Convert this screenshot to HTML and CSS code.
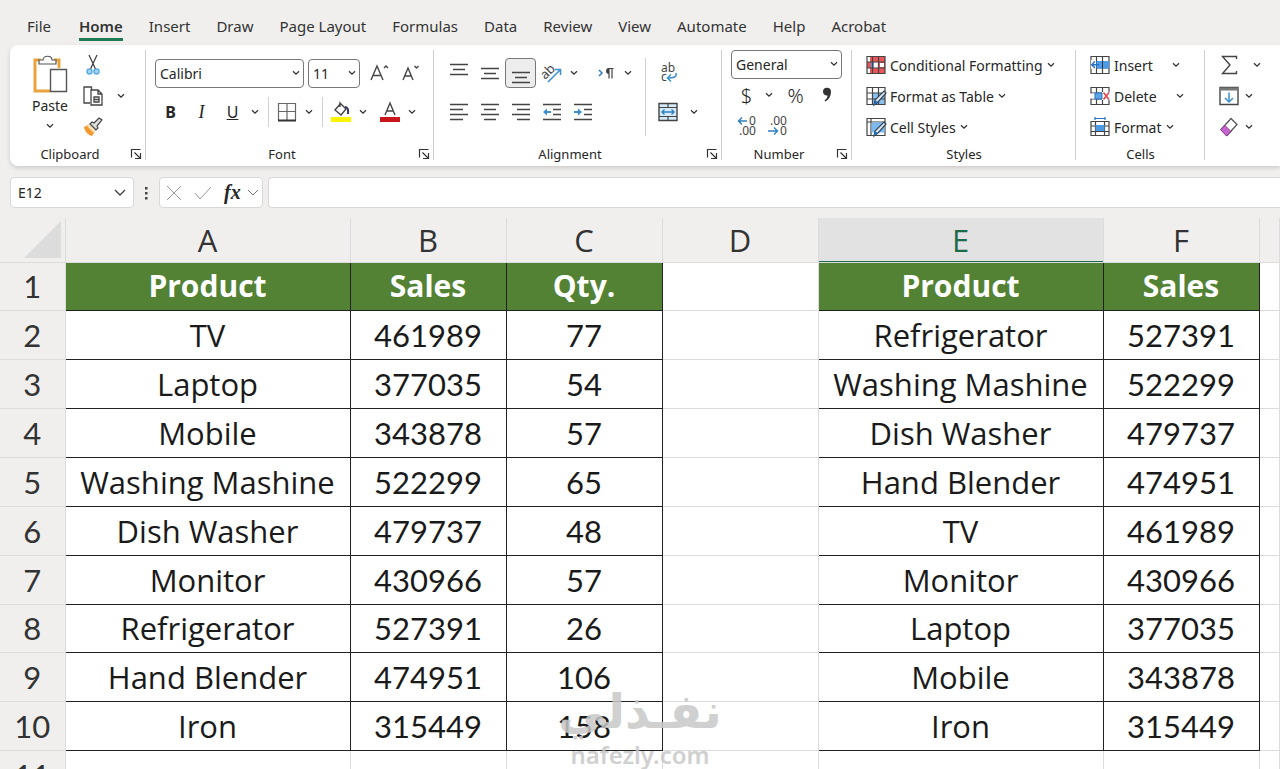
FILE: index.html
```html
<!DOCTYPE html>
<html lang="en">
<head>
    <meta charset="UTF-8">
    <meta name="viewport" content="width=device-width, initial-scale=1.0">
    <title>Product Sales</title>
    <link rel="stylesheet" href="styles.css">
</head>
<body>
    <!-- shared icons -->
    <svg class="sprite" aria-hidden="true">
        <symbol id="chevron" viewBox="0 0 8 6"><path d="M1 1.2 4 4.2 7 1.2" fill="none" stroke="#333" stroke-width="1.3"/></symbol>
        <symbol id="launcher" viewBox="0 0 12 12"><path d="M1.5 9.5v-8h9M4.5 4.5l5.5 5.5M10.500 5v5.500H5" fill="none" stroke="#333" stroke-width="1.2"/></symbol>
        <symbol id="grid" viewBox="0 0 20 20"><path d="M1 1.500h18v17H1zM1 7h18M1 13h18M6.500 1v18M12.500 1v18" fill="none" stroke="#444" stroke-width="1.200"/></symbol>
    </svg>

    <nav class="tabs">
        <a href="#">File</a>
        <a href="#" class="active">Home</a>
        <a href="#">Insert</a>
        <a href="#">Draw</a>
        <a href="#">Page Layout</a>
        <a href="#">Formulas</a>
        <a href="#">Data</a>
        <a href="#">Review</a>
        <a href="#">View</a>
        <a href="#">Automate</a>
        <a href="#">Help</a>
        <a href="#">Acrobat</a>
    </nav>

    <div class="ribbon">
        <section class="group clipboard">
            <div class="tools">
                <button class="paste">
                    <svg width="36" height="40" viewBox="0 0 36 40">
                        <path d="M9 6H3v31h15M22 6h5v8" fill="none" stroke="#e8a33d" stroke-width="3"/>
                        <path d="M7 10V6h4c0-5 9-5 9 0h4v4z" fill="#fff" stroke="#555" stroke-width="1.2"/>
                        <path d="M18.500 15.500h16v22h-16z" fill="#fff" stroke="#555" stroke-width="1.4"/>
                    </svg>
                    <span>Paste</span>
                    <svg class="chev"><use href="#chevron"/></svg>
                </button>
                <div class="stack">
                    <div class="row"><button class="tool" aria-label="Cut">
                        <svg width="16" height="22" viewBox="0 0 16 22"><path d="M4 1l6.500 14M12 1L5.500 15" fill="none" stroke="#444" stroke-width="1.300"/><circle cx="4.500" cy="17.500" r="2.500" fill="#a9d5f5" stroke="#5aaee8" stroke-width="1.500"/><circle cx="11.500" cy="17.500" r="2.500" fill="#a9d5f5" stroke="#5aaee8" stroke-width="1.500"/></svg>
                    </button></div>
                    <div class="row"><button class="tool" aria-label="Copy">
                        <svg width="20" height="20" viewBox="0 0 20 20"><path d="M7 17H1V1h7.500v3" fill="none" stroke="#444" stroke-width="1.300"/><path d="M8 4h7l4 4v11H8zM15 4v4h4M11 11h5v5h-5zM11 13.500h5" fill="none" stroke="#444" stroke-width="1.300"/></svg>
                    </button><button class="drop" aria-label="Copy options"><svg class="chev"><use href="#chevron"/></svg></button></div>
                    <div class="row"><button class="tool" aria-label="Format Painter">
                        <svg width="20" height="20" viewBox="0 0 20 20"><path d="M1 10l6-3 6 6-4 6c-4-1-7-4-8-9z" fill="#f39a2e"/><path d="M4 9l3-2 6 6-2 3z" fill="#fbe3c0"/><path d="M7 7l2-2 2 1 5-5 3 2-5 6 1 2-2 2z" fill="#ddd" stroke="#444" stroke-width="1.200"/></svg>
                    </button></div>
                </div>
            </div>
            <footer><span>Clipboard</span><button class="launch" aria-label="Clipboard settings"><svg><use href="#launcher"/></svg></button></footer>
        </section>

        <section class="group two font">
            <div class="tools">
                <div class="row">
                    <span class="combo family"><select aria-label="Font"><option>Calibri</option></select><svg class="chev"><use href="#chevron"/></svg></span>
                    <span class="combo size"><select aria-label="Font size"><option>11</option></select><svg class="chev"><use href="#chevron"/></svg></span>
                    <button class="tool" aria-label="Increase font size"><svg width="20" height="20" viewBox="0 0 20 20"><path d="M1 17L7 3l6 14M3 12.500h8M14 5l2-2 2 2" fill="none" stroke="#444" stroke-width="1.400"/></svg></button>
                    <button class="tool" aria-label="Decrease font size"><svg width="20" height="20" viewBox="0 0 20 20"><path d="M2 17L7 5l5 12M4 13h6M13.500 3l2 2 2-2" fill="none" stroke="#444" stroke-width="1.400"/></svg></button>
                </div>
                <div class="row">
                    <button class="tool bold">B</button>
                    <button class="tool italic">I</button>
                    <button class="tool underline">U</button>
                    <button class="drop" aria-label="Underline options"><svg class="chev"><use href="#chevron"/></svg></button>
                    <i class="sep"></i>
                    <button class="tool" aria-label="Borders"><svg width="20" height="20" viewBox="0 0 20 20"><path d="M1.500 18V1.500h17V18M10 2v16M2 9.500h17" fill="none" stroke="#666" stroke-width="1.200"/><path d="M1 18.500h18" stroke="#333" stroke-width="2"/></svg></button>
                    <button class="drop" aria-label="Border options"><svg class="chev"><use href="#chevron"/></svg></button>
                    <i class="sep"></i>
                    <button class="tool" aria-label="Fill color"><svg width="22" height="22" viewBox="0 0 22 22"><path d="M11 2L5 9l6 5 5-6-6-6v4" fill="none" stroke="#444" stroke-width="1.400"/><path d="M15 6c3 0 3.500 3 3 7" fill="none" stroke="#336" stroke-width="2"/><path d="M1 16h20v5H1z" fill="#fdf500"/></svg></button>
                    <button class="drop" aria-label="Fill colors"><svg class="chev"><use href="#chevron"/></svg></button>
                    <button class="tool after" aria-label="Font color"><svg width="20" height="22" viewBox="0 0 20 22"><path d="M5 14l5-12 5 12M7 10h6" fill="none" stroke="#444" stroke-width="1.400"/><path d="M0 16h20v5H0z" fill="#c9141b"/></svg></button>
                    <button class="drop" aria-label="Font colors"><svg class="chev"><use href="#chevron"/></svg></button>
                </div>
            </div>
            <footer><span>Font</span><button class="launch" aria-label="Font settings"><svg><use href="#launcher"/></svg></button></footer>
        </section>

        <section class="group two alignment">
            <div class="tools">
                <div class="halves">
                    <div>
                        <div class="row">
                            <button class="tool" aria-label="Top align"><svg class="lines" viewBox="0 0 18 18"><path d="M0 .500h18M3 5.500h12M0 10.500h18"/></svg></button>
                            <button class="tool" aria-label="Middle align"><svg class="lines" viewBox="0 0 18 18"><path d="M0 4.500h18M3 9.500h12M0 14.500h18"/></svg></button>
                            <button class="tool pressed" aria-label="Bottom align"><svg class="lines" viewBox="0 0 18 18"><path d="M0 8.500h18M3 13.500h12M0 18.500h18"/></svg></button>
                            <button class="tool" aria-label="Orientation"><svg width="22" height="22" viewBox="0 0 22 22"><text x="0" y="14" transform="rotate(-45 7 11)" font-size="13" fill="#444">ab</text><path d="M7 20L19 8M14 7.500h5.500V13" fill="none" stroke="#3a8fd0" stroke-width="1.500"/></svg></button>
                            <button class="drop" aria-label="Orientation options"><svg class="chev"><use href="#chevron"/></svg></button>
                            <button class="tool direction" aria-label="Text direction"><svg width="16" height="14" viewBox="0 0 16 14"><path d="M1 4l3 3-3 3" fill="none" stroke="#2f7fc0" stroke-width="1.500"/><path d="M11 2.500v10M14 2.500v10M15.500 2.500H10" fill="none" stroke="#444" stroke-width="1.200"/><path d="M11 2a3 3 0 0 0 0 6z" fill="#444"/></svg></button>
                            <button class="drop" aria-label="Direction options"><svg class="chev"><use href="#chevron"/></svg></button>
                        </div>
                        <div class="row">
                            <button class="tool" aria-label="Align left"><svg class="lines" viewBox="0 0 18 18"><path d="M0 1.500h18M0 6.500h13M0 11.500h18M0 16.500h13"/></svg></button>
                            <button class="tool" aria-label="Center"><svg class="lines" viewBox="0 0 18 18"><path d="M0 1.500h18M3 6.500h12M0 11.500h18M3 16.500h12"/></svg></button>
                            <button class="tool" aria-label="Align right"><svg class="lines" viewBox="0 0 18 18"><path d="M0 1.500h18M5 6.500h13M0 11.500h18M5 16.500h13"/></svg></button>
                            <button class="tool" aria-label="Decrease indent"><svg class="lines" viewBox="0 0 18 18"><path d="M0 1.500h18M10 6.500h8M10 11.500h8M0 16.500h18"/><path d="M4 5.500v7L0 9zM4 8h4v2H4z" class="blue"/></svg></button>
                            <button class="tool" aria-label="Increase indent"><svg class="lines" viewBox="0 0 18 18"><path d="M0 1.500h18M10 6.500h8M10 11.500h8M0 16.500h18"/><path d="M4 5.500v7L8 9zM0 8h4v2H0z" class="blue"/></svg></button>
                        </div>
                    </div>
                    <i class="sep tall"></i>
                    <div>
                        <div class="row">
                            <button class="tool" aria-label="Wrap text"><svg width="18" height="20" viewBox="0 0 18 20"><text x="2" y="9" font-size="12" fill="#444">ab</text><text x="2" y="18" font-size="12" fill="#444">c</text><path d="M17 10c1 4-2 5-8 5M12 11.500L8.500 15l3.500 3.500" fill="none" stroke="#3a8fd0" stroke-width="1.500"/></svg></button>
                        </div>
                        <div class="row">
                            <button class="tool" aria-label="Merge and center"><svg width="20" height="20" viewBox="0 0 20 20"><path d="M1 1.500h18v17H1z" fill="#d5ebfa" stroke="#444" stroke-width="1.400"/><path d="M1 5.500h18M1 14.500h18M10 1v4M10 15v4" stroke="#444" stroke-width="1.200"/><path d="M4 10h12M6.500 7.500L4 10l2.500 2.500M13.500 7.500L16 10l-2.500 2.500" fill="none" stroke="#2f7fc0" stroke-width="1.400"/></svg></button>
                            <button class="drop after" aria-label="Merge options"><svg class="chev"><use href="#chevron"/></svg></button>
                        </div>
                    </div>
                </div>
            </div>
            <footer><span>Alignment</span><button class="launch" aria-label="Alignment settings"><svg><use href="#launcher"/></svg></button></footer>
        </section>

        <section class="group number">
            <div class="tools">
                <div class="row"><span class="combo format"><select aria-label="Number format"><option>General</option></select><svg class="chev"><use href="#chevron"/></svg></span></div>
                <div class="row">
                    <button class="tool sign">$</button>
                    <button class="drop" aria-label="Currency options"><svg class="chev"><use href="#chevron"/></svg></button>
                    <button class="tool sign after">%</button>
                    <button class="tool" aria-label="Comma style"><svg width="10" height="16" viewBox="0 0 10 16"><path d="M1 5a4 4 0 0 1 8-.500c0 4.500-2 8-5.500 10l-1-1C4.500 12 5.500 10.500 5.500 8.500A3.700 3.700 0 0 1 1 5z" fill="#333"/></svg></button>
                </div>
                <div class="row">
                    <button class="tool" aria-label="Increase decimal"><svg width="20" height="22" viewBox="0 0 20 22"><text x="12" y="10" font-size="12" fill="#444">0</text><text x="2" y="20" font-size="12" fill="#444">.00</text><path d="M10 6H2M5 2.500L1.500 6 5 9.500" fill="none" stroke="#2f7fc0" stroke-width="1.400"/></svg></button>
                    <button class="tool" aria-label="Decrease decimal"><svg width="20" height="22" viewBox="0 0 20 22"><text x="2" y="10" font-size="12" fill="#444">.00</text><text x="12" y="20" font-size="12" fill="#444">0</text><path d="M0 16h9M6 12.500l3.500 3.500L6 19.500" fill="none" stroke="#2f7fc0" stroke-width="1.400"/></svg></button>
                </div>
            </div>
            <footer><span>Number</span><button class="launch" aria-label="Number settings"><svg><use href="#launcher"/></svg></button></footer>
        </section>

        <section class="group styles">
            <div class="tools">
                <div class="row"><button class="command">
                    <svg class="icon" viewBox="0 0 20 20"><path d="M1 1h18v18H1z" fill="#fff"/><path d="M4 1h8v6H4zM1 7h4v6H1zM13 1h6v18h-6zM4 13h8v6H4z" fill="#e9575a"/><path d="M14 8h4v4h-4z" fill="#fff"/><path d="M5 7h3v6H5z" fill="#5a9fe0"/><use href="#grid"/></svg>
                    <span>Conditional Formatting</span><svg class="chev"><use href="#chevron"/></svg></button></div>
                <div class="row"><button class="command">
                    <svg class="icon" viewBox="0 0 20 20"><path d="M1 1h18v18H1z" fill="#fff"/><path d="M6 7h13v12H6z" fill="#8cc1ee"/><use href="#grid"/><path d="M18 5l2 2-8 9-4 3 1-5z" fill="#dbe9f5" stroke="#345" stroke-width="1.200"/><path d="M8 19l1-5 3 2z" fill="#2472c8"/></svg>
                    <span>Format as Table</span><svg class="chev"><use href="#chevron"/></svg></button></div>
                <div class="row"><button class="command">
                    <svg class="icon" viewBox="0 0 20 20"><path d="M1 1.500h18v17H1z" fill="#fff" stroke="#444" stroke-width="1.200"/><path d="M1 5h18M5 1v18" stroke="#444" stroke-width="1.200"/><path d="M5.500 5.500h13v10h-13z" fill="#7cb9ee"/><path d="M18 5l2 2-8 9-4 3 1-5z" fill="#dbe9f5" stroke="#345" stroke-width="1.200"/><path d="M8 19l1-5 3 2z" fill="#2472c8"/></svg>
                    <span>Cell Styles</span><svg class="chev"><use href="#chevron"/></svg></button></div>
            </div>
            <footer><span>Styles</span></footer>
        </section>

        <section class="group cells">
            <div class="tools">
                <div class="row"><button class="command split">
                    <svg class="icon" viewBox="0 0 20 20"><use href="#grid"/><path d="M6.500 6h12.500v7.500H6.500z" fill="#4c9be6"/><path d="M12.500 6v7.500" stroke="#333"/><path d="M1 5h5v9H1z" fill="#fff"/><path d="M9 9.700H2M5 6.500L1.800 9.700 5 13" fill="none" stroke="#2472c8" stroke-width="1.500"/></svg>
                    <span>Insert</span><svg class="chev"><use href="#chevron"/></svg></button></div>
                <div class="row"><button class="command split">
                    <svg class="icon" viewBox="0 0 20 20"><use href="#grid"/><path d="M12 6h8v8h-8zM0 7.600h5.800v5H0z" fill="#fff"/><path d="M5 7h7v6H5z" fill="#5ca6ea" stroke="#2472c8"/><path d="M13.500 6.500l5.500 7M19 6.500l-5.500 7" stroke="#e0474b" stroke-width="1.600"/></svg>
                    <span>Delete</span><svg class="chev"><use href="#chevron"/></svg></button></div>
                <div class="row"><button class="command">
                    <svg class="icon" viewBox="0 0 20 20"><path d="M1 4.500h18v14H1zM1 9h18M1 14.500h18M5.500 4v15M14.500 4v15" fill="none" stroke="#444" stroke-width="1.200"/><path d="M5.500 8h9v6h-9z" fill="#4c9be6"/><path d="M5 0v3M15 0v3M5 1.500h10" stroke="#2472c8" stroke-width="1.200"/></svg>
                    <span>Format</span><svg class="chev"><use href="#chevron"/></svg></button></div>
            </div>
            <footer><span>Cells</span></footer>
        </section>

        <section class="group editing">
            <div class="tools">
                <div class="row"><button class="command wide" aria-label="AutoSum"><svg class="icon" viewBox="0 0 20 20"><path d="M17.500 4V1.500H3.500L11 10l-7.500 8.500h14V16" fill="none" stroke="#444" stroke-width="1.400"/></svg><svg class="chev"><use href="#chevron"/></svg></button></div>
                <div class="row"><button class="command" aria-label="Fill"><svg class="icon" viewBox="0 0 20 20"><path d="M1 1.500h18v17H1z" fill="#fff" stroke="#444" stroke-width="1.400"/><path d="M1 1.500h18v3H1z" fill="#777"/><path d="M10 6.500V16M6 12l4 4 4-4" fill="none" stroke="#3a8fd0" stroke-width="1.500"/></svg><svg class="chev"><use href="#chevron"/></svg></button></div>
                <div class="row"><button class="command" aria-label="Clear"><svg class="icon" viewBox="0 0 20 20"><path d="M12 1.500l6 6L8 18.500l-6-6z" fill="#fff" stroke="#555" stroke-width="1.300"/><path d="M6 8.500l6 6-4.500 4.500-6-6.500z" fill="#c765cf" stroke="#8b3d94"/></svg><svg class="chev"><use href="#chevron"/></svg></button></div>
            </div>
            <footer><span>Editing</span></footer>
        </section>
    </div>

    <div class="formula-bar">
        <div class="box name-box">
            <input type="text" value="E12" aria-label="Name box">
            <svg width="12" height="8" viewBox="0 0 12 8"><path d="M1 1l5 5 5-5" fill="none" stroke="#444" stroke-width="1.400"/></svg>
        </div>
        <svg class="dots" width="4" height="14" viewBox="0 0 4 14"><path d="M1 1h2.500v2.500H1zM1 6h2.500v2.500H1zM1 11h2.500v2.500H1z" fill="#444"/></svg>
        <div class="box entry">
            <button aria-label="Cancel"><svg width="16" height="16" viewBox="0 0 16 16"><path d="M1 1l14 14M15 1L1 15" stroke="#999"/></svg></button>
            <button aria-label="Enter"><svg width="18" height="14" viewBox="0 0 18 14"><path d="M1 7l5 6L17 1" fill="none" stroke="#999"/></svg></button>
            <button class="fx">fx</button>
            <svg width="12" height="8" viewBox="0 0 12 8"><path d="M1 1l5 5 5-5" fill="none" stroke="#777"/></svg>
        </div>
        <input type="text" class="box formula" aria-label="Formula">
    </div>

    <main class="sheet">
        <table>
            <colgroup>
                <col class="c-head"><col class="c-wide"><col class="c-num"><col class="c-num"><col class="c-num"><col class="c-wide"><col class="c-num"><col>
            </colgroup>
            <thead>
                <tr><th class="corner"><svg width="37" height="37" viewBox="0 0 37 37"><path d="M37 0v37H0z" fill="#dcdcdc"/></svg></th><th>A</th><th>B</th><th>C</th><th>D</th><th class="selected">E</th><th>F</th><th></th></tr>
            </thead>
            <tbody>
                <tr class="title"><th>1</th><td class="d">Product</td><td class="d">Sales</td><td class="d">Qty.</td><td></td><td class="d">Product</td><td class="d">Sales</td><td></td></tr>
                <tr><th>2</th><td class="d">TV</td><td class="d">461989</td><td class="d">77</td><td></td><td class="d">Refrigerator</td><td class="d">527391</td><td></td></tr>
                <tr><th>3</th><td class="d">Laptop</td><td class="d">377035</td><td class="d">54</td><td></td><td class="d">Washing Mashine</td><td class="d">522299</td><td></td></tr>
                <tr><th>4</th><td class="d">Mobile</td><td class="d">343878</td><td class="d">57</td><td></td><td class="d">Dish Washer</td><td class="d">479737</td><td></td></tr>
                <tr><th>5</th><td class="d">Washing Mashine</td><td class="d">522299</td><td class="d">65</td><td></td><td class="d">Hand Blender</td><td class="d">474951</td><td></td></tr>
                <tr><th>6</th><td class="d">Dish Washer</td><td class="d">479737</td><td class="d">48</td><td></td><td class="d">TV</td><td class="d">461989</td><td></td></tr>
                <tr><th>7</th><td class="d">Monitor</td><td class="d">430966</td><td class="d">57</td><td></td><td class="d">Monitor</td><td class="d">430966</td><td></td></tr>
                <tr><th>8</th><td class="d">Refrigerator</td><td class="d">527391</td><td class="d">26</td><td></td><td class="d">Laptop</td><td class="d">377035</td><td></td></tr>
                <tr><th>9</th><td class="d">Hand Blender</td><td class="d">474951</td><td class="d">106</td><td></td><td class="d">Mobile</td><td class="d">343878</td><td></td></tr>
                <tr><th>10</th><td class="d">Iron</td><td class="d">315449</td><td class="d">158</td><td></td><td class="d">Iron</td><td class="d">315449</td><td></td></tr>
                <tr><th>11</th><td></td><td></td><td></td><td></td><td></td><td></td><td></td></tr>
            </tbody>
        </table>
    </main>

    <div class="watermark">
        <span lang="ar" dir="rtl">نفـذلي</span>
        <small>nafezly.com</small>
    </div>
</body>
</html>
```
FILE: styles.css
```css
* {
    box-sizing: border-box;
}
body {
    margin: 0;
    height: 100vh;
    overflow: hidden;
    display: flex;
    flex-direction: column;
    position: relative;
    background-color: #f0efee;
    font-family: 'Noto Sans', 'Open Sans', sans-serif;
    font-size: 14px;
    color: #262626;
}
button, input, select {
    font: inherit;
    color: inherit;
    border: none;
    background: none;
    padding: 0;
    margin: 0;
}
svg {
    display: block;
    flex: none;
    overflow: visible;
}
.sprite {
    width: 0;
    height: 0;
    position: absolute;
}
.chev {
    width: 8px;
    height: 6px;
}

/* tabs */
.tabs {
    flex: none;
    display: flex;
    gap: 26px;
    height: 45px;
    padding: 12px 27px 0;
    font-size: 15px;
}
.tabs a {
    height: 29px;
    line-height: 28px;
    color: #333;
    text-decoration: none;
    white-space: nowrap;
}
.tabs .active {
    margin-left: 2px;
    font-weight: 600;
    border-bottom: 3px solid #1e7a55;
}

/* ribbon */
.ribbon {
    flex: none;
    display: flex;
    height: 121px;
    margin-left: 10px;
    overflow: hidden;
    background-color: #fff;
    border-radius: 8px 0 0 8px;
    box-shadow: 0 2px 4px rgba(0, 0, 0, 0.15);
}
.group {
    flex: none;
    display: flex;
    flex-direction: column;
    justify-content: space-between;
    position: relative;
    padding: 5px 0 2px 9px;
}
.group::after {
    content: "";
    position: absolute;
    right: 0;
    top: 5px;
    bottom: 6px;
    width: 1px;
    background-color: #d0d0d0;
}
.group footer {
    display: flex;
    align-items: center;
    height: 20px;
    margin-left: -9px;
    font-size: 13px;
}
.group footer span {
    flex: 1;
    text-align: center;
}
.launch {
    width: 16px;
}
.launch svg {
    width: 12px;
    height: 12px;
}
.row {
    display: flex;
    align-items: center;
    height: 30px;
    margin-bottom: 1px;
}
.two .row {
    margin: 8px 0 9px;
}
.two .row + .row {
    margin-top: 0;
}
.tool {
    width: 31px;
    height: 30px;
    display: flex;
    align-items: center;
    justify-content: center;
}
.drop {
    width: 14px;
    height: 30px;
    display: flex;
    align-items: center;
    justify-content: center;
}
.after {
    margin-left: 4px;
}
.sep {
    width: 1px;
    height: 30px;
    margin: 0 2px 0 6px;
    background-color: #d0d0d0;
}
.clipboard { width: 136px; }
.font { width: 288px; }
.alignment { width: 288px; }
.number { width: 130px; }
.styles { width: 224px; }
.cells { width: 129px; }
.editing { width: 196px; }

.clipboard .tools {
    display: flex;
}
.paste {
    width: 58px;
    display: flex;
    flex-direction: column;
    align-items: center;
    padding-top: 4px;
    padding-left: 4px;
}
.paste span {
    line-height: 24px;
    margin-bottom: 5px;
}
.clipboard .drop {
    margin-left: 6px;
}

.combo {
    display: flex;
    align-items: center;
    position: relative;
    height: 29px;
    margin-right: 4px;
}
.combo select {
    appearance: none;
    width: 100%;
    height: 100%;
    padding-left: 4px;
    border: 1px solid #777;
    border-radius: 4px;
    background-color: #fff;
}
.combo .chev {
    position: absolute;
    right: 4px;
}
.family { width: 149px; }
.size { width: 52px; }
.format { width: 111px; }
.bold {
    font-weight: 700;
    font-size: 16px;
}
.italic {
    font-family: 'Liberation Serif', serif;
    font-style: italic;
    font-size: 18px;
}
.underline {
    font-size: 16px;
    text-decoration: underline;
}
.sign {
    font-weight: 300;
    font-size: 20px;
}
.halves {
    display: flex;
}
.lines {
    width: 18px;
    height: 18px;
    fill: none;
    stroke: #444;
    stroke-width: 1.4;
}
.lines .blue {
    fill: #3a8fd0;
    stroke: none;
}
.pressed {
    background-color: #ededed;
    border: 1px solid #777;
    border-radius: 4px;
}
.direction {
    margin-left: 9px;
}
.tall {
    height: 78px;
    margin: 8px 6px 0 10px;
}
.command {
    display: flex;
    align-items: center;
    gap: 4px;
    white-space: nowrap;
}
.icon {
    width: 20px;
    height: 20px;
}
.split .chev {
    margin-left: 15px;
}
.number {
    padding-top: 4px;
}
.styles, .cells, .editing {
    padding-left: 14px;
}
.styles footer, .cells footer, .editing footer {
    margin-left: -14px;
}
.editing .command {
    gap: 6px;
}
.editing .wide {
    gap: 14px;
}

/* formula bar */
.formula-bar {
    flex: none;
    display: flex;
    align-items: center;
    height: 31px;
    margin: 11px 0 0 10px;
}
.box {
    display: flex;
    align-items: center;
    height: 31px;
    background-color: #fff;
    border: 1px solid #d8d8d8;
    border-radius: 4px;
}
.name-box {
    width: 124px;
    padding: 0 7px;
}
.name-box input {
    flex: 1;
    min-width: 0;
}
.dots {
    margin: 0 11px 0 10px;
}
.entry {
    width: 104px;
    margin-right: 5px;
    padding-left: 6px;
}
.entry button {
    margin-right: 12px;
}
.entry .fx {
    margin-right: 6px;
    font-family: 'Liberation Serif', serif;
    font-style: italic;
    font-weight: 700;
    font-size: 20px;
}
.formula {
    flex: 1;
    min-width: 0;
    border-right: none;
    border-radius: 4px 0 0 4px;
}

/* sheet */
.sheet {
    flex: 1;
    min-height: 0;
    overflow: hidden;
    margin-top: 10px;
}
table {
    width: 100%;
    height: 582px;
    table-layout: fixed;
    border-collapse: collapse;
    font-family: Lato, 'Open Sans', sans-serif;
    font-size: 31px;
    line-height: 40px;
    color: #1a1a1a;
}
.c-head { width: 65px; }
.c-wide { width: 285px; }
.c-num { width: 156px; }
th, td {
    height: 48px;
    padding: 0;
    text-align: center;
    white-space: nowrap;
    border: 1px solid #dcdcdc;
}
td {
    background-color: #fff;
}
th {
    font-weight: 400;
    color: #333;
    border-left: none;
    background-color: #f0efee;
}
thead th {
    height: 44px;
    border-top: none;
}
/* names and headings use the wider face, figures keep Lato */
thead th, .title td, td:nth-child(2), td:nth-child(6) {
    font-family: 'Open Sans', sans-serif;
}
.corner svg {
    margin-left: 24px;
}
thead .selected {
    color: #1e6b4c;
    background-color: #e2e2e2;
    box-shadow: inset 0 -1px #1e6b4c;
}
td.d {
    border: 1px solid #222;
}
.title .d {
    font-size: 30px;
    font-weight: 700;
    color: #fff;
    background-color: #548235;
}

.watermark {
    position: absolute;
    left: 562px;
    top: 678px;
    width: 156px;
    display: flex;
    flex-direction: column;
    align-items: center;
    color: #c8c8c8;
    opacity: 0.85;
    pointer-events: none;
}
.watermark span {
    font-family: 'DejaVu Sans', sans-serif;
    font-size: 48px;
    font-weight: 700;
    line-height: 66px;
}
.watermark small {
    font-size: 24px;
    font-weight: 600;
    line-height: 22px;
}
```
